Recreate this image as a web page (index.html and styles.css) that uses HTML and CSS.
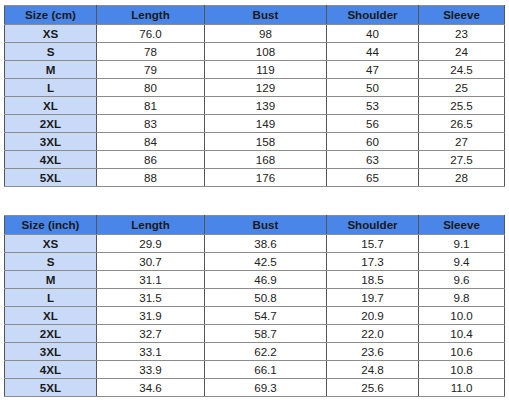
FILE: index.html
```html
<!DOCTYPE html>
<html>
<head>
<meta charset="utf-8">
<link rel="stylesheet" href="styles.css">
</head>
<body>
<div class="page">
<table class="chart">
<colgroup><col class="c1"><col class="c2"><col class="c3"><col class="c4"><col class="c5"></colgroup>
<thead><tr><th>Size (cm)</th><th>Length</th><th>Bust</th><th>Shoulder</th><th>Sleeve</th></tr></thead>
<tbody>
<tr><th>XS</th><td>76.0</td><td>98</td><td>40</td><td>23</td></tr>
<tr><th>S</th><td>78</td><td>108</td><td>44</td><td>24</td></tr>
<tr><th>M</th><td>79</td><td>119</td><td>47</td><td>24.5</td></tr>
<tr><th>L</th><td>80</td><td>129</td><td>50</td><td>25</td></tr>
<tr><th>XL</th><td>81</td><td>139</td><td>53</td><td>25.5</td></tr>
<tr><th>2XL</th><td>83</td><td>149</td><td>56</td><td>26.5</td></tr>
<tr><th>3XL</th><td>84</td><td>158</td><td>60</td><td>27</td></tr>
<tr><th>4XL</th><td>86</td><td>168</td><td>63</td><td>27.5</td></tr>
<tr><th>5XL</th><td>88</td><td>176</td><td>65</td><td>28</td></tr>
</tbody>
</table>
<table class="chart second">
<colgroup><col class="c1"><col class="c2"><col class="c3"><col class="c4"><col class="c5"></colgroup>
<thead><tr><th>Size (inch)</th><th>Length</th><th>Bust</th><th>Shoulder</th><th>Sleeve</th></tr></thead>
<tbody>
<tr><th>XS</th><td>29.9</td><td>38.6</td><td>15.7</td><td>9.1</td></tr>
<tr><th>S</th><td>30.7</td><td>42.5</td><td>17.3</td><td>9.4</td></tr>
<tr><th>M</th><td>31.1</td><td>46.9</td><td>18.5</td><td>9.6</td></tr>
<tr><th>L</th><td>31.5</td><td>50.8</td><td>19.7</td><td>9.8</td></tr>
<tr><th>XL</th><td>31.9</td><td>54.7</td><td>20.9</td><td>10.0</td></tr>
<tr><th>2XL</th><td>32.7</td><td>58.7</td><td>22.0</td><td>10.4</td></tr>
<tr><th>3XL</th><td>33.1</td><td>62.2</td><td>23.6</td><td>10.6</td></tr>
<tr><th>4XL</th><td>33.9</td><td>66.1</td><td>24.8</td><td>10.8</td></tr>
<tr><th>5XL</th><td>34.6</td><td>69.3</td><td>25.6</td><td>11.0</td></tr>
</tbody>
</table>
</div>
</body>
</html>
```
FILE: styles.css
```css
html, body {
  margin: 0;
  padding: 0;
  background: #ffffff;
}
.page {
  padding: 5px 0 0 4px;
  font-family: "Liberation Sans", Arial, sans-serif;
  font-size: 11.6px;
  color: #222222;
}
.chart {
  border-collapse: collapse;
  table-layout: fixed;
  width: 500px;
}
.second {
  margin-top: 28px;
}
.c1 { width: 92px; }
.c2 { width: 108px; }
.c3 { width: 122px; }
.c4 { width: 92px; }
.c5 { width: 86px; }
.chart th,
.chart td {
  padding: 0;
  height: 17px;
  line-height: 17px;
  text-align: center;
  border-top: 1px solid #8c8c8c;
  border-bottom: 1px solid #8c8c8c;
  border-left: 1px solid #555555;
  border-right: 1px solid #555555;
  white-space: nowrap;
}
.chart td {
  font-weight: normal;
}
.chart thead th {
  background: #4a86e8;
  font-weight: bold;
  height: 18px;
  line-height: 18px;
  color: #1a1a1a;
}
.chart tbody th {
  background: #c9daf8;
  font-weight: bold;
  color: #1a1a1a;
}
```
